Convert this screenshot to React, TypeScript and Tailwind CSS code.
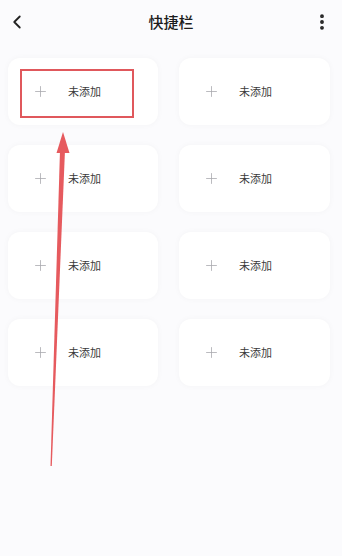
import { ChevronLeft, EllipsisVertical, Plus } from 'lucide-react'

const slots = Array.from({ length: 8 }, (_, i) => i)

function SlotCard({ highlighted }: { highlighted?: boolean }) {
  return (
    <div className="relative flex h-[67px] items-center rounded-xl bg-white pl-[24px] shadow-[0_0_6px_rgba(0,0,0,0.035)]">
      <Plus className="h-[17px] w-[17px] text-[#a8a8ac]" strokeWidth={1.1} />
      <span className="ml-[19px] text-[11px] text-[#3a3a3a]">未添加</span>
      {highlighted && (
        <div className="absolute left-[12px] top-[11px] h-[49px] w-[114px] border-2 border-[#e0585c]" />
      )}
    </div>
  )
}

export default function App() {
  return (
    <div
      className="relative h-[556px] w-[342px] overflow-hidden bg-[#fbfbfd]"
      style={{ fontFamily: '"Noto Sans CJK SC", "Noto Sans", sans-serif' }}
    >
      <header className="grid h-[44px] grid-cols-[60px_1fr_60px] items-center px-[6px]">
        <ChevronLeft className="h-[22px] w-[22px] text-[#222]" strokeWidth={2} />
        <h1 className="text-center text-[15px] font-medium text-[#1c1c1c]">快捷栏</h1>
        <EllipsisVertical className="ml-auto mr-[4px] h-[20px] w-[20px] text-[#222]" strokeWidth={2.6} />
      </header>

      <div className="mt-[14px] grid grid-cols-[150px_151px] gap-x-[21px] gap-y-[20px] pl-[8px]">
        {slots.map((i) => (
          <SlotCard key={i} highlighted={i === 0} />
        ))}
      </div>

      {/* annotation arrow */}
      <svg className="pointer-events-none absolute inset-0" width="342" height="556">
        <polygon points="50.5,466 51.8,466 65,150 60,150" fill="#e65a5e" />
        <polygon points="63,132 56.5,153 69.5,153" fill="#e65a5e" />
      </svg>
    </div>
  )
}
